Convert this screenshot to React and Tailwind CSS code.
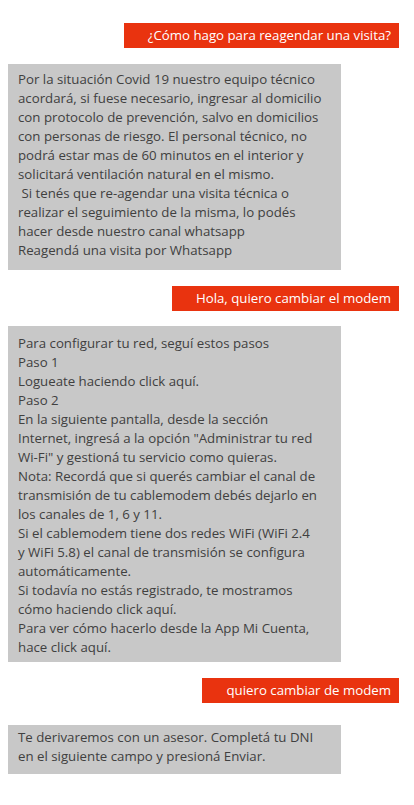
import React from 'react';

const bubble1 = [
  'Por la situación Covid 19 nuestro equipo técnico',
  'acordará, si fuese necesario, ingresar al domicilio',
  'con protocolo de prevención, salvo en domicilios',
  'con personas de riesgo. El personal técnico, no',
  'podrá estar mas de 60 minutos en el interior y',
  'solicitará ventilación natural en el mismo.',
  '\u00a0Si tenés que re-agendar una visita técnica o',
  'realizar el seguimiento de la misma, lo podés',
  'hacer desde nuestro canal whatsapp',
  'Reagendá una visita por Whatsapp',
];

const bubble2 = [
  'Para configurar tu red, seguí estos pasos',
  'Paso 1',
  'Logueate haciendo click aquí.',
  'Paso 2',
  'En la siguiente pantalla, desde la sección',
  'Internet, ingresá a la opción "Administrar tu red',
  'Wi-Fi" y gestioná tu servicio como quieras.',
  'Nota: Recordá que si querés cambiar el canal de',
  'transmisión de tu cablemodem debés dejarlo en',
  'los canales de 1, 6 y 11.',
  'Si el cablemodem tiene dos redes WiFi (WiFi 2.4',
  'y WiFi 5.8) el canal de transmisión se configura',
  'automáticamente.',
  'Si todavía no estás registrado, te mostramos',
  'cómo haciendo click aquí.',
  'Para ver cómo hacerlo desde la App Mi Cuenta,',
  'hace click aquí.',
];

const bubble3 = [
  'Te derivaremos con un asesor. Completá tu DNI',
  'en el siguiente campo y presioná Enviar.',
];

const UserMsg = ({ text, className = '' }) => (
  <div className={`flex justify-end pr-[15px] ${className}`}>
    <div className="bg-[#e9330f] text-white pl-[24px] pr-[8px] py-[3px] leading-[19px] whitespace-nowrap">
      {text}
    </div>
  </div>
);

// lines are kept as in the reference so wrapping doesn't depend on the font
const BotMsg = ({ lines, className = '', pad }) => (
  <div className={`pl-[8px] ${className}`}>
    <div className={`w-[333px] bg-[#c8c8c8] text-[#404040] leading-[19px] px-[10px] ${pad}`}>
      {lines.map((l, i) => (
        <div key={i} className="whitespace-nowrap">{l}</div>
      ))}
    </div>
  </div>
);

export default function App() {
  return (
    <div
      className="min-h-screen bg-white pt-[23px] text-[13.25px]"
      style={{ fontFamily: '"Open Sans", "Noto Sans", sans-serif' }}
    >
      <UserMsg text="¿Cómo hago para reagendar una visita?" />
      <BotMsg lines={bubble1} className="mt-[16px]" pad="pt-[6px] pb-[10px]" />
      <UserMsg text="Hola, quiero cambiar el modem " className="mt-[16px]" />
      <BotMsg lines={bubble2} className="mt-[15px]" pad="pt-[8px] pb-[5px]" />
      <UserMsg text="quiero cambiar de modem" className="mt-[16px]" />
      <BotMsg lines={bubble3} className="mt-[22px]" pad="pt-[3px] pb-[8px]" />
    </div>
  );
}
